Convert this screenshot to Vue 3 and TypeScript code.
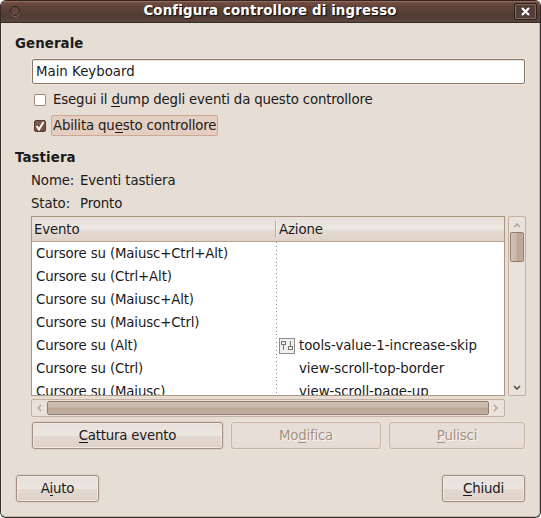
<script setup lang="ts">
interface EventRow {
  event: string
  action: string
  icon?: boolean
}

const rows: EventRow[] = [
  { event: 'Cursore su (Maiusc+Ctrl+Alt)', action: '' },
  { event: 'Cursore su (Ctrl+Alt)', action: '' },
  { event: 'Cursore su (Maiusc+Alt)', action: '' },
  { event: 'Cursore su (Maiusc+Ctrl)', action: '' },
  { event: 'Cursore su (Alt)', action: 'tools-value-1-increase-skip', icon: true },
  { event: 'Cursore su (Ctrl)', action: 'view-scroll-top-border' },
  { event: 'Cursore su (Maiusc)', action: 'view-scroll-page-up' },
]
</script>

<template>
  <div class="window">
    <header class="titlebar">
      <span class="dot"></span>
      <h1>Configura controllore di ingresso</h1>
      <button class="close" aria-label="Chiudi finestra">
        <svg width="9" height="9" viewBox="0 0 9 9"><path d="M1.5 1.5L7.5 7.5M7.5 1.5L1.5 7.5" /><path class="ends" d="M.5 1.5h2M6.500 1.500h2M.5 7.500h2M6.500 7.500h2M1.500 .5v2M7.500 .5v2M1.500 6.500v2M7.500 6.500v2" /></svg>
      </button>
    </header>
    <main class="body">
      <h2>Generale</h2>
      <div class="entry">Main Keyboard</div>
      <label class="check">
        <span class="box"></span>
        <span class="caption">Esegui il <u>d</u>ump degli eventi da questo controllore</span>
      </label>
      <label class="check second">
        <span class="box on">
          <svg width="12" height="12" viewBox="0 0 12 12"><path d="M2.5 6L5 9.5L9.5 2" /></svg>
        </span>
        <span class="caption focus">Abilita qu<u>e</u>sto controllore</span>
      </label>
      <h2 class="keys">Tastiera</h2>
      <dl>
        <dt>Nome:</dt><dd>Eventi tastiera</dd>
        <dt>Stato:</dt><dd>Pronto</dd>
      </dl>
      <div class="panes">
        <div class="table">
          <div class="thead"><span class="c1">Evento</span><span class="c2">Azione</span></div>
          <div v-for="row in rows" :key="row.event" class="row">
            <span class="c1">{{ row.event }}</span>
            <span class="c2">
              <span class="slot">
                <svg v-if="row.icon" width="16" height="16" viewBox="0 0 16 16" shape-rendering="crispEdges">
                  <rect x=".5" y=".5" width="15" height="15" fill="#f0f0ee" stroke="#8c8f8b" />
                  <path d="M2.500 3.500h4v3h-4zM9.500 8.500h4v3h-4zM4.500 7v5M11.500 3v5" fill="none" stroke="#747772" />
                </svg>
              </span>{{ row.action }}
            </span>
          </div>
        </div>
        <div class="vbar">
          <svg class="up" width="8" height="5" viewBox="0 0 8 5"><path d="M1 4L4 1L7 4" /></svg>
          <span class="vthumb"></span>
          <svg class="down" width="8" height="5" viewBox="0 0 8 5"><path d="M1 1L4 4L7 1" /></svg>
        </div>
      </div>
      <div class="hbar">
        <svg width="5" height="8" viewBox="0 0 5 8"><path d="M4 1L1 4L4 7" /></svg>
        <span class="hthumb"></span>
        <svg width="5" height="8" viewBox="0 0 5 8"><path d="M1 1L4 4L1 7" /></svg>
      </div>
      <div class="actions">
        <button class="btn"><u>C</u>attura evento</button>
        <button class="btn" disabled>Mo<u>d</u>ifica</button>
        <button class="btn" disabled><u>P</u>ulisci</button>
      </div>
      <footer>
        <button class="btn">A<u>i</u>uto</button>
        <button class="btn"><u>C</u>hiudi</button>
      </footer>
    </main>
  </div>
</template>

<style>
body { margin: 0; background: #fff; overflow: hidden; }
</style>

<style scoped>
* { box-sizing: border-box; }
.window {
  width: 541px; height: 518px; overflow: hidden;
  border: 1px solid #332c29; border-top: 0; border-radius: 6px;
  background: #e6ddd4; color: #1a1a1a;
  font: 13.33px/17px "DejaVu Sans", sans-serif;
}
.titlebar {
  height: 23px; display: flex; align-items: center; padding: 0 3px 0 9px;
  border-top: 1px solid #35231f; border-bottom: 1px solid #3a2a25;
  box-shadow: inset 0 1px #93695c;
  background: linear-gradient(#75564b 0, #644339 5px, #533f35 12px, #4f3b32 13px, #59453b 100%);
}
.dot { width: 10px; height: 10px; margin-bottom: 2px; border: 1px solid #30221d; border-radius: 50%; background: #64483f; box-shadow: 0 1px #80665b; }
h1 { flex: 1; margin: 0; padding-left: 6px; font-size: 13.33px; line-height: 17px; letter-spacing: .15px; text-align: center; color: #fff; text-shadow: 1px 1px 1px #1c1412, 1px 1px #2b211d; }
h1 { margin-bottom: 2px; }
.close { width: 23px; height: 17px; padding: 0; border: 1px solid #2c1e1a; border-radius: 2px; background: #543f36; box-shadow: inset 0 0 0 1px #83695f; display: flex; align-items: center; justify-content: center; }
.close path { stroke: #fff; stroke-width: 2.2; fill: none; }
.close .ends { stroke-width: 1; }
.body {
  height: 494px; padding: 12px 14px 0 13px;
  border: 1px solid #f0e8e1; border-top: 0; border-right-color: #c8b7a9; border-bottom-color: #c8b7a9;
  border-radius: 0 0 5px 5px;
}
h2 { margin: 0; font-size: 13.33px; line-height: 17px; letter-spacing: .1px; }
.entry {
  margin: 7px 0 0 17px; width: 493px; height: 25px; padding: 3px 3px;
  border: 1px solid #8a7463; border-radius: 2px; background: #fff;
  box-shadow: 0 0 0 1px #efe8e2, inset 0 1px #e8e4e0;
}
.check { display: flex; align-items: center; height: 21px; margin: 5px 0 0 19px; letter-spacing: -.16px; }
.box { width: 12px; height: 12px; border: 1px solid #a1897a; border-radius: 2px; background: #fff; }
.box.on { border-color: #543930; background: linear-gradient(#80584a, #78513f); }
.box svg { display: block; margin: -1px; }
.box path { fill: none; stroke: #fff; stroke-width: 2; }
.caption { margin-left: 5px; padding: 1px 1px 1px; height: 21px; border: 1px solid transparent; border-radius: 2px; white-space: nowrap; }
.focus { background: #e3cec1; border-color: #cda896; }
u { text-decoration: none; box-shadow: inset 0 -1px currentColor; display: inline-block; line-height: 15px; height: 15px; }
.keys { margin-top: 13px; }
dl { display: grid; grid-template-columns: 49px 1fr; row-gap: 6px; margin: 6px 0 0 16px; letter-spacing: -.12px; }
dt, dd { margin: 0; }
.panes { display: flex; gap: 3px; margin: 4px 0 0 16px; }
.table { width: 474px; flex: none; height: 180px; border: 1px solid #ab9684; background: #fff; overflow: hidden; }
.thead { height: 25px; display: flex; padding: 4px 0; border-bottom: 1px solid #b8a393; background: linear-gradient(#e7dfd8, #ede8e3 12px, #e5dcd4 13px, #dfd2c8); letter-spacing: -.12px; }
.c1 { width: 244px; flex: none; padding-left: 4px; letter-spacing: -.15px; }
.thead .c1 { padding-left: 2px; border-right: 1px solid #bda998; }
.thead .c2 { border-left: 1px solid #f5efe9; padding-left: 2px; }
.row { height: 23px; line-height: 23px; display: flex; white-space: nowrap; }
.row .c2 { display: flex; align-items: center; padding-left: 3px; letter-spacing: -.04px; background: repeating-linear-gradient(#8d8d8d 0 1px, transparent 1px 4px) 0 0 / 1px 100% no-repeat; }
.slot { width: 16px; height: 16px; margin-right: 4px; }
.slot svg { display: block; }
.vbar { width: 18px; flex: none; height: 180px; border: 1px solid #c4b1a1; border-radius: 2px; background: #e9e1db; display: flex; flex-direction: column; align-items: center; padding: 6px 1px 5px; }
.vbar path, .hbar path { fill: none; stroke: #b8a595; stroke-width: 1.5; }
.vbar .down { margin-top: auto; }
.vbar .down path { stroke: #504740; }
.vthumb { width: 14px; height: 30px; margin-top: 4px; border: 1px solid #937c6b; border-radius: 2px; background: linear-gradient(90deg, #d3c3b6, #c6b4a5 50%, #baa593 51%, #c1ad9e); }
.hbar { width: 474px; height: 18px; margin: 3px 0 0 16px; display: flex; align-items: center; justify-content: space-between; padding: 0 6px 0 5px; border: 1px solid #c4b1a1; border-radius: 2px; background: #e9e1db; }
.hthumb { width: 442px; height: 14px; border: 1px solid #937c6b; border-radius: 2px; background: linear-gradient(#d0c0b3, #c6b5a7 50%, #b9a594 51%, #c1ae9f); }
.actions { display: grid; grid-template-columns: 191px 150px 136px; gap: 8px; margin: 5px 0 0 17px; }
.btn {
  height: 27px; padding: 0; color: #1a1a1a; font: inherit; letter-spacing: -.2px;
  border: 1px solid #a28f81; border-radius: 3px;
  background: linear-gradient(#e8e0da, #ece6e1 50%, #e4dad2 51%, #ddd0c7);
  box-shadow: 0 0 0 1px #ddd2c8, inset 0 0 0 1px #f0e9e4;
}
.btn:disabled { color: #a59182; text-shadow: 1px 1px #faf6f3; border-color: #c7b5a6; background: linear-gradient(#e6ddd6, #e8dfd9 50%, #e5dbd3); box-shadow: 0 0 0 1px #ece3db; }
footer { display: flex; justify-content: space-between; padding-left: 1px; margin-top: 26px; }
footer .btn { width: 83px; }
</style>
